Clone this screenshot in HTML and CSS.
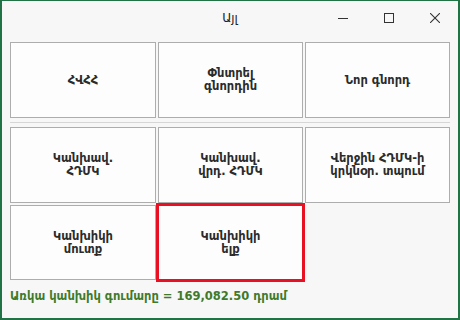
FILE: index.html
```html
<!DOCTYPE html>
<html lang="hy">
<head>
  <meta charset="UTF-8">
  <title>Այլ</title>
  <link rel="stylesheet" href="styles.css">
</head>
<body>

<div class="window">
  <div class="titlebar">
    <span class="title">Այլ</span>
    <div class="controls">
      <!-- minimize -->
      <span class="ctl">
        <svg width="10" height="10" viewBox="0 0 10 10"><path d="M0 5.5h10" stroke="#333" stroke-width="1"/></svg>
      </span>
      <!-- maximize -->
      <span class="ctl">
        <svg width="10" height="10" viewBox="0 0 10 10"><rect x="0.5" y="0.5" width="9" height="9" fill="none" stroke="#333" stroke-width="1"/></svg>
      </span>
      <!-- close -->
      <span class="ctl">
        <svg width="10" height="10" viewBox="0 0 10 10"><path d="M0 0L10 10M10 0L0 10" stroke="#333" stroke-width="1.1"/></svg>
      </span>
    </div>
  </div>

  <div class="content">
    <div class="row-top">
      <button class="tile">ՀՎՀՀ</button>
      <button class="tile">Փնտրել<br>գնորդին</button>
      <button class="tile">Նոր գնորդ</button>
    </div>

    <div class="separator"></div>

    <div class="row-bottom">
      <button class="tile">Կանխավ.<br>ՀԴՄԿ</button>
      <button class="tile">Կանխավ.<br>վրդ. ՀԴՄԿ</button>
      <button class="tile">Վերջին ՀԴՄԿ-ի<br>կրկնօր. տպում</button>
      <button class="tile">Կանխիկի<br>մուտք</button>
      <button class="tile focused">Կանխիկի<br>ելք</button>
    </div>

    <div class="status">Առկա կանխիկ գումարը = 169,082.50 դրամ</div>
  </div>
</div>

</body>
</html>
```

FILE: styles.css
```css
body {
  margin: 0;
  font-family: 'DejaVu Sans', 'Liberation Sans', sans-serif;
  background: #f7f7f7;
}
.window {
  width: 460px;
  height: 320px;
  box-sizing: border-box;
  border: 2px solid #217346;
  border-top-width: 1px;
  background: #f7f7f7;
}
.titlebar {
  height: 29px;
  display: flex;
  align-items: center;
  position: relative;
}
.title {
  flex: 1;
  text-align: center;
  font-size: 12px;
  color: #222;
  margin-top: 4px;
}
.controls {
  position: absolute;
  right: 0;
  top: 0;
  height: 29px;
  display: flex;
}
.ctl {
  width: 46px;
  height: 29px;
  display: flex;
  align-items: center;
  justify-content: center;
  margin-top: 2px;
}
.content {
  padding: 12px 8px 0 8px;
}
.row-top,
.row-bottom {
  display: grid;
  grid-template-columns: 146px 145px 145px;
  column-gap: 2px;
  row-gap: 2px;
}
.row-top {
  grid-template-rows: 76px;
}
.row-bottom {
  grid-template-rows: 76px 75px;
}
.separator {
  height: 1px;
  background: #d6d6d6;
  margin: 4px 0 4px 0;
  width: 440px;
}
.tile {
  box-sizing: border-box;
  border: 1px solid #adadad;
  background: #fdfdfd;
  font-family: 'DejaVu Sans', 'Liberation Sans', sans-serif;
  font-weight: bold;
  font-size: 11.5px;
  line-height: 13px;
  color: #2b2b2b;
  padding: 0;
  margin: 0;
}
.tile.focused {
  outline: 3px solid #e81123;
  outline-offset: -1px;
}
.status {
  margin-top: 9px;
  font-size: 11.5px;
  font-weight: bold;
  color: #3f7a2b;
}
```
